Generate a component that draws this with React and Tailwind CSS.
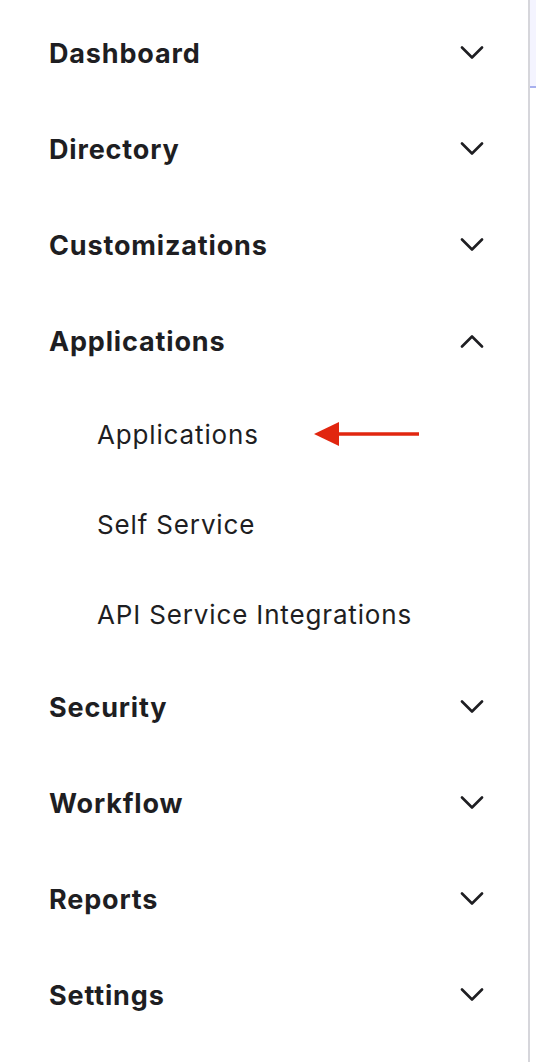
import { memo } from "react";

const Chevron = ({ up }) => (
  <svg width="24" height="14" viewBox="0 0 24 14" fill="none" className="shrink-0">
    <path
      d={up ? "M2 12.5L12 2.5L22 12.5" : "M2 1.5L12 11.5L22 1.5"}
      stroke="#1e1e22"
      strokeWidth="2.6"
      strokeLinecap="round"
      strokeLinejoin="round"
    />
  </svg>
);

const Section = ({ label, open }) => (
  <div className="h-[96px] flex items-center justify-between pl-[49px] pr-[44px]">
    <span className="pt-[2px] text-[27px] font-bold text-[#1e1e22] tracking-[0.84px]">{label}</span>
    <Chevron up={open} />
  </div>
);

const SubItem = ({ label, arrow }) => (
  <div className="relative h-[90px] flex items-center pl-[97px]">
    <span className="text-[26px] text-[#1e1e22] tracking-[0.85px]">{label}</span>
    {arrow && (
      <svg
        width="106"
        height="26"
        viewBox="0 0 106 26"
        className="absolute left-[314px] top-[32px]"
      >
        <path d="M24 11.3H105V14.7H24Z" fill="#e1260f" />
        <path d="M0 13L25 1V25Z" fill="#e1260f" />
      </svg>
    )}
  </div>
);

const App = () => {
  return (
    <div className="flex w-[536px] h-[1062px] bg-white font-['Inter',sans-serif] overflow-hidden">
      {/* Sidebar */}
      <aside className="w-[530px] shrink-0 border-r-2 border-[#d6d6db] pt-[5px]">
        <Section label="Dashboard" />
        <Section label="Directory" />
        <Section label="Customizations" />
        <Section label="Applications" open />
        <SubItem label="Applications" arrow />
        <SubItem label="Self Service" />
        <SubItem label="API Service Integrations" />
        <Section label="Security" />
        <Section label="Workflow" />
        <Section label="Reports" />
        <Section label="Settings" />
      </aside>

      {/* Main edge */}
      <div className="flex-1">
        <div className="h-[88px] bg-[#f4f4ff] border-b-2 border-[#a8b0ee]" />
      </div>
    </div>
  );
};

export default memo(App);
